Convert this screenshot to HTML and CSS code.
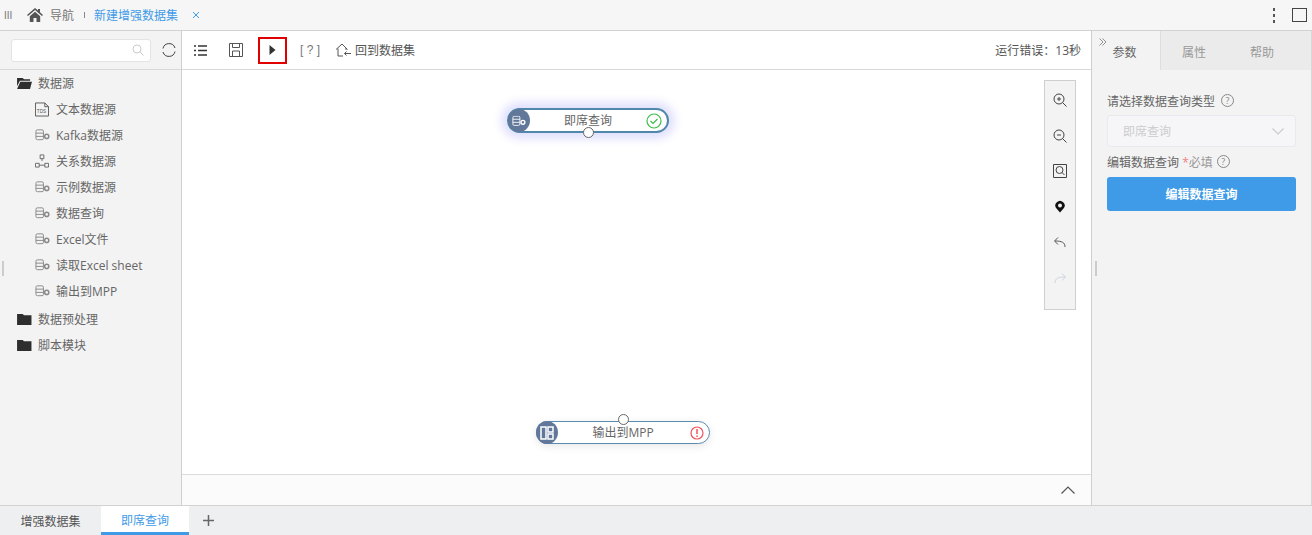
FILE: index.html
```html
<!DOCTYPE html>
<html lang="zh">
<head>
<meta charset="utf-8">
<title>新建增强数据集</title>
<link rel="stylesheet" href="styles.css">
</head>
<body>
<svg class="defs" width="0" height="0">
  <symbol id="db" viewBox="0 0 16 12">
    <rect x="1" y="0.5" width="8" height="10.5" rx="1.5" fill="none" stroke="currentColor"/>
    <path d="M1 4h8M1 7.500h8" stroke="currentColor" fill="none"/>
    <circle cx="12.500" cy="7.500" r="2.200" fill="none" stroke="currentColor" stroke-width="1.600"/>
  </symbol>
  <symbol id="folder" viewBox="0 0 16 14">
    <path d="M0 1h6l1.500 1.500H15.500V13H0z" fill="#2e2e2e"/>
  </symbol>
  <symbol id="folder-open" viewBox="0 0 16 14">
    <path d="M0 1h6l1.500 1.500H14V4H3L0 10z" fill="#2e2e2e"/>
    <path d="M3.500 5H16l-2 8H0z" fill="#2e2e2e"/>
  </symbol>
</svg>
<div class="app">
  <header class="topbar">
    <span class="grip">III</span>
    <svg class="home" viewBox="0 0 16 14"><path d="M8 0 0 7l1 1 7-6 7 6 1-1-3-2.700V1h-2v1.600z M2.800 8.200 8 3.800l5.200 4.400V14H9.500V10H6.500v4H2.800z" fill="#555"/></svg>
    <span class="nav-label">导航</span>
    <span class="nav-sep"></span>
    <span class="nav-active">新建增强数据集</span>
    <svg class="nav-close" viewBox="0 0 8 8"><path d="M1 1l6 6M7 1 1 7" stroke="#3f9be8" fill="none"/></svg>
    <span class="spacer"></span>
    <span class="kebab"><i></i><i></i><i></i></span>
    <span class="maximize"></span>
  </header>

  <div class="main">
    <aside class="left">
      <div class="search-row">
        <div class="search">
          <svg viewBox="0 0 12 12"><circle cx="5" cy="5" r="4" fill="none" stroke="#ccc"/><path d="M8 8l3.500 3.500" stroke="#ccc" fill="none"/></svg>
        </div>
        <svg class="refresh" viewBox="0 0 16 16"><path d="M2 6.500A6.200 6.200 0 0 1 14 6M14 9.500A6.200 6.200 0 0 1 2 10" fill="none" stroke="#444"/></svg>
      </div>
      <ul class="tree">
        <li class="root"><svg class="folder"><use href="#folder-open"/></svg>数据源</li>
        <li class="leaf"><svg class="tds" viewBox="0 0 15 15"><path d="M.5.500h10l4 4v10H.5z M10.500.500v4h4" fill="none" stroke="#555"/><text x="2" y="11" class="tds-text">TDS</text></svg>文本数据源</li>
        <li class="leaf"><svg class="db"><use href="#db"/></svg>Kafka数据源</li>
        <li class="leaf"><svg class="rel" viewBox="0 0 15 14"><path d="M5.500.500h4v4h-4zM.5 9.500h4v4h-4zM10.500 9.500h4v4h-4zM7.500 4.500V7M4.500 11.500h6" fill="none" stroke="#666"/></svg>关系数据源</li>
        <li class="leaf"><svg class="db"><use href="#db"/></svg>示例数据源</li>
        <li class="leaf"><svg class="db"><use href="#db"/></svg>数据查询</li>
        <li class="leaf"><svg class="db"><use href="#db"/></svg>Excel文件</li>
        <li class="leaf"><svg class="db"><use href="#db"/></svg>读取Excel sheet</li>
        <li class="leaf"><svg class="db"><use href="#db"/></svg>输出到MPP</li>
        <li class="root gap"><svg class="folder"><use href="#folder"/></svg>数据预处理</li>
        <li class="root"><svg class="folder"><use href="#folder"/></svg>脚本模块</li>
      </ul>
      <span class="handle handle-left"></span>
    </aside>

    <section class="center">
      <div class="toolbar">
        <span class="tool tool-list">
          <svg viewBox="0 0 13 11"><path d="M0 1h2M4 1h9M0 5.500h2M4 5.500h9M0 10h2M4 10h9" stroke="#333" stroke-width="1.500" fill="none"/></svg>
        </span>
        <span class="tool tool-save">
          <svg viewBox="0 0 14 14"><path d="M.5.500h13v13H.5zM3.500.500v4h7v-4M3.500 13.500V8h7v5.500" fill="none" stroke="#555"/></svg>
        </span>
        <span class="tool tool-run">
          <svg viewBox="0 0 7 10"><path d="M.5 0 6.500 5 .5 10z" fill="#333"/></svg>
        </span>
        <span class="tool-help">[ ? ]</span>
        <span class="tool-back">
          <svg viewBox="0 0 16 14"><path d="M1 6.500 7 1l5.500 5.500M3 5.500V13h5M11 5v2M9.500 10.500H16M9.500 10.500l2-2M9.500 10.500l2 2" fill="none" stroke="#555"/></svg>
          回到数据集
        </span>
        <span class="spacer"></span>
        <span class="run-error">运行错误：13秒</span>
      </div>
      <div class="canvas">
        <div class="node node-query">
          <span class="node-icon">
            <svg viewBox="0 0 16 12"><use href="#db"/></svg>
          </span>
          <span class="node-title">即席查询</span>
          <svg class="node-status" viewBox="0 0 16 16"><circle cx="8" cy="8" r="7" fill="none" stroke="#3dbd4a" stroke-width="1.200"/><path d="M4.500 8l2.500 2.500 4.500-4.500" fill="none" stroke="#3dbd4a" stroke-width="1.200"/></svg>
          <span class="port port-bottom"></span>
        </div>
        <div class="node node-output">
          <span class="node-icon">
            <svg viewBox="0 0 14 14"><path d="M1 1h5v12H1zM8 1h5v5H8zM8 8h5v5H8z" fill="none" stroke="#fff" stroke-width="1.500"/></svg>
          </span>
          <span class="node-title">输出到MPP</span>
          <svg class="node-status" viewBox="0 0 14 14"><circle cx="7" cy="7" r="6" fill="none" stroke="#f0545c" stroke-width="1.200"/><path d="M7 3v5M7 9.500v1.500" fill="none" stroke="#f0545c" stroke-width="1.500"/></svg>
          <span class="port port-top"></span>
        </div>
        <div class="zoom-panel">
          <svg viewBox="0 0 14 14"><circle cx="6" cy="6" r="5" fill="none" stroke="#444"/><path d="M9.500 9.500 13.500 13.500M4 6h4M6 4v4" fill="none" stroke="#444"/></svg>
          <svg viewBox="0 0 14 14"><circle cx="6" cy="6" r="5" fill="none" stroke="#444"/><path d="M9.500 9.500 13.500 13.500M4 6h4" fill="none" stroke="#444"/></svg>
          <svg viewBox="0 0 14 14"><path d="M.5.500h13v13H.5z" fill="none" stroke="#444"/><circle cx="6.500" cy="6" r="3.500" fill="none" stroke="#444"/><path d="M9 8.500l2.500 2.500" stroke="#444" fill="none"/></svg>
          <svg viewBox="0 0 14 14"><path d="M7 12.500 3.500 8.500A4.600 4.600 0 1 1 10.500 8.500z" fill="#111"/><circle cx="7" cy="5.500" r="2" fill="#f3f3f3"/></svg>
          <svg viewBox="0 0 14 14"><path d="M12 12C12 7.500 9 6 2 6M5 2.500 1.500 6 5 9.500" fill="none" stroke="#555"/></svg>
          <svg viewBox="0 0 14 14"><path d="M2 12C2 7.500 5 6 12 6M9 2.500 12.500 6 9 9.500" fill="none" stroke="#cdd3e0"/></svg>
        </div>
      </div>
      <div class="canvas-foot">
        <svg viewBox="0 0 14 8"><path d="M.5 7.500 7 1l6.500 6.500" fill="none" stroke="#555" stroke-width="1.200"/></svg>
      </div>
    </section>

    <aside class="right">
      <svg class="collapse" viewBox="0 0 8 8"><path d="M.5.500 4 4 .5 7.500M3.500.500 7 4 3.500 7.500" fill="none" stroke="#777" stroke-width=".8"/></svg>
      <div class="tabs">
        <span class="tab active">参数</span>
        <span class="tab">属性</span>
        <span class="tab">帮助</span>
      </div>
      <div class="form">
        <div class="label">请选择数据查询类型<span class="qm">?</span></div>
        <div class="select">即席查询
          <svg viewBox="0 0 12 7"><path d="M.5.500 6 6 11.500.500" fill="none" stroke="#ccc" stroke-width="1.200"/></svg>
        </div>
        <div class="label label-edit">编辑数据查询 <span class="req"><b>*</b>必填</span><span class="qm">?</span></div>
        <div class="btn">编辑数据查询</div>
      </div>
      <span class="handle handle-right"></span>
    </aside>
  </div>

  <footer class="sheets">
    <span class="sheet">增强数据集</span>
    <span class="sheet current">即席查询</span>
    <svg class="add" viewBox="0 0 11 11"><path d="M5.500 0v11M0 5.500h11" stroke="#666" stroke-width="1.500" fill="none"/></svg>
  </footer>
</div>
</body>
</html>
```
FILE: styles.css
```css
* { box-sizing: border-box; }
html, body { margin: 0; padding: 0; height: 100%; overflow: hidden; }
body {
  font-family: "Open Sans", "Noto Sans CJK SC", sans-serif;
  font-size: 12px;
  color: #666;
  background: #fff;
}
.defs { position: absolute; }
.spacer { flex: 1; }
.app { display: flex; flex-direction: column; height: 535px; }

/* top bar */
.topbar {
  height: 31px;
  flex: none;
  display: flex;
  align-items: center;
  background: #f6f6f6;
  border-bottom: 1px solid #d2d2d2;
}
.grip { margin-left: 4px; width: 23px; font-size: 10px; color: #777; font-family: "Liberation Sans", sans-serif; }
.home { width: 16px; height: 14px; }
.nav-label { margin-left: 7px; color: #777; }
.nav-sep { width: 1px; height: 6px; background: #888; margin-left: 10px; }
.nav-active { margin-left: 9px; color: #3f9be8; }
.nav-close { width: 8px; height: 8px; margin-left: 14px; }
.kebab { display: flex; flex-direction: column; gap: 3px; margin-right: 17px; }
.kebab i { width: 2px; height: 3px; background: #555; display: block; }
.maximize { width: 15px; height: 14px; border: 1px solid #444; margin-right: 5px; }

.main { flex: 1; display: flex; min-height: 0; }

/* left tree */
.left {
  width: 182px;
  flex: none;
  background: #f3f3f3;
  border-right: 1px solid #cfcfcf;
  position: relative;
}
.search-row {
  height: 39px;
  display: flex;
  align-items: center;
  border-bottom: 1px solid #d8d8d8;
  padding-left: 11px;
}
.search {
  width: 140px;
  height: 23px;
  background: #fff;
  border: 1px solid #e3e3e3;
  border-radius: 3px;
  display: flex;
  align-items: center;
  justify-content: flex-end;
  padding-right: 6px;
}
.search svg { width: 12px; height: 12px; }
.refresh { width: 16px; height: 16px; margin-left: 10px; }
.tree { list-style: none; margin: 0; padding: 0; }
.tree li { height: 26px; display: flex; align-items: center; white-space: nowrap; }
.root { padding-left: 17px; }
.root.gap { margin-top: 2px; }
.leaf { padding-left: 35px; }
.folder { width: 15px; height: 13px; margin-right: 6px; }
.leaf svg { margin-right: 7px; flex: none; }
.db { width: 15px; height: 12px; color: #888; margin-right: 6px !important; }
.tds { width: 14px; height: 15px; }
.tds-text { font-size: 5px; font-family: "Liberation Sans", sans-serif; fill: #555; }
.rel { width: 14px; height: 14px; }
.handle { position: absolute; top: 230px; width: 2px; height: 15px; background: #ccc; }
.handle-left { left: 2px; }
.handle-right { left: 3px; }

/* centre */
.center { flex: 1; display: flex; flex-direction: column; min-width: 0; }
.toolbar {
  height: 39px;
  flex: none;
  display: flex;
  align-items: center;
  background: #fff;
  border-bottom: 1px solid #d8d8d8;
  padding-right: 11px;
}
.tool { display: flex; align-items: center; justify-content: center; }
.tool-list { margin-left: 11px; width: 14px; }
.tool-list svg { width: 13px; height: 11px; }
.tool-save { margin-left: 22px; }
.tool-save svg { width: 14px; height: 14px; }
.tool-run {
  margin-left: 15px;
  width: 29px;
  height: 27px;
  border: 2px solid #e00000;
}
.tool-run svg { width: 7px; height: 10px; }
.tool-help { margin-left: 13px; width: 20px; color: #777; white-space: pre; font-size: 12px; font-family: "Liberation Sans", sans-serif; }
.tool-back { margin-left: 15px; display: flex; align-items: center; gap: 4px; color: #555; }
.tool-back svg { width: 16px; height: 14px; }
.run-error { color: #555; }

.canvas { flex: 1; position: relative; background: #fff; }
.node {
  position: absolute;
  height: 25px;
  background: #fff;
  border-radius: 13px;
  border: 1px solid #5a8cb0;
  display: flex;
  align-items: center;
  justify-content: center;
}
.node-title { padding-bottom: 2px; color: #666; }
.node-query {
  left: 325px;
  top: 38px;
  width: 162px;
  border-width: 2px;
  box-shadow: 0 0 10px 6px #e0e0fd;
  border-color: #4f88ab;
}
.node-output {
  left: 354px;
  top: 351px;
  width: 174px;
  height: 23px;
  box-shadow: 0 2px 8px rgba(0, 0, 0, .1);
}
.node-icon {
  position: absolute;
  left: -1px;
  top: -1px;
  width: 22px;
  height: 23px;
  border-radius: 50%;
  background: #62789a;
  color: #fff;
  display: flex;
  align-items: center;
  justify-content: center;
}
.node-output .node-icon { width: 22px; height: 23px; }
.node-icon svg { width: 14px; height: 12px; }
.node-output .node-icon svg { width: 14px; height: 14px; }
.node-status { position: absolute; right: 5px; top: 3px; width: 16px; height: 16px; }
.node-output .node-status { width: 14px; height: 14px; top: 4px; right: 5px; }
.port {
  position: absolute;
  width: 11px;
  height: 11px;
  background: #fff;
  border: 1px solid #666;
  border-radius: 50%;
}
.port-bottom { left: 74px; bottom: -7px; }
.port-top { left: 81px; top: -8px; }

.zoom-panel {
  position: absolute;
  right: 16px;
  top: 10px;
  width: 32px;
  height: 230px;
  background: #f3f3f3;
  border: 1px solid #cfcfcf;
  display: flex;
  flex-direction: column;
  align-items: center;
  gap: 21.6px;
  padding-top: 12px;
}
.zoom-panel svg { width: 14px; height: 14px; flex: none; }

.canvas-foot {
  height: 31px;
  flex: none;
  background: #fbfbfb;
  border-top: 1px solid #dcdcdc;
  display: flex;
  align-items: center;
  justify-content: flex-end;
  padding-right: 17px;
}
.canvas-foot svg { width: 14px; height: 8px; }

/* right */
.right {
  width: 221px;
  flex: none;
  background: #f3f3f3;
  border-left: 1px solid #cfcfcf;
  border-right: 1px solid #d8d8d8;
  margin-left: -1px;
  position: relative;
}
.collapse { position: absolute; left: 7px; top: 7px; width: 8px; height: 8px; }
.tabs { display: flex; height: 39px; background: #ebebeb; }
.tab { width: 68px; display: flex; align-items: center; justify-content: center; color: #999; padding: 3px 2px 0 0; }
.tab.active { background: #f3f3f3; color: #666; border-right: 1px solid #dedede; width: 69px; padding-right: 3px; }
.form { padding: 22px 15px 0; }
.label { display: flex; align-items: center; height: 17px; white-space: pre; color: #666; }
.qm {
  width: 13px;
  height: 13px;
  margin-left: 6px;
  border: 1px solid #888;
  border-radius: 50%;
  font-size: 9px;
  line-height: 11px;
  text-align: center;
  color: #888;
}
.label-edit .qm { margin-left: 4px; }
.select {
  margin-top: 6px;
  height: 32px;
  background: #f6f6f8;
  border: 1px solid #e9e9ef;
  border-radius: 3px;
  color: #ccc;
  display: flex;
  align-items: center;
  justify-content: space-between;
  padding: 0 11px 0 15px;
}
.select svg { width: 12px; height: 7px; }
.label-edit { margin-top: 6px; }
.req { color: #999; }
.req b { color: #f08080; font-weight: 400; }
.btn {
  margin-top: 7px;
  height: 34px;
  background: #3f9be8;
  border-radius: 3px;
  color: #fff;
  font-weight: 600;
  display: flex;
  align-items: center;
  justify-content: center;
}

/* bottom */
.sheets {
  height: 30px;
  flex: none;
  display: flex;
  align-items: center;
  background: #eeeff1;
  border-top: 1px solid #d2d2d2;
}
.sheet { width: 101px; height: 100%; display: flex; align-items: center; justify-content: center; color: #555; padding-top: 1px; }
.sheet.current {
  width: 88px;
  background: #fff;
  color: #3f9be8;
  border-bottom: 3px solid #3f9be8;
}
.add { width: 11px; height: 11px; margin-left: 14px; margin-top: -1px; }
```
